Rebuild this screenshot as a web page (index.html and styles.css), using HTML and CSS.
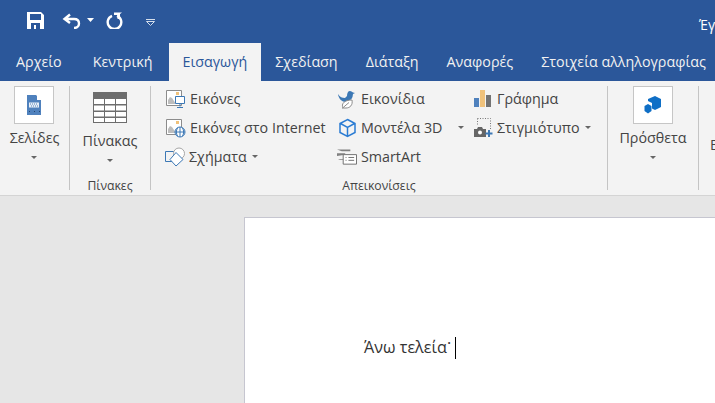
FILE: index.html
```html
<!DOCTYPE html>
<html lang="el">
<head>
<meta charset="utf-8">
<title>Word</title>
<link rel="stylesheet" href="styles.css">
</head>
<body>
<div class="app">
  <header class="titlebar">
    <div class="qat">
      <svg class="qa-save" width="17" height="17" viewBox="0 0 17 17"><path fill="#fff" fill-rule="evenodd" d="M0 0h14l3 3v14H0zM3 2v6h11V2zM4 11v6h3v-4h2v4h4v-6z"/></svg>
      <svg class="qa-undo" width="19" height="16" viewBox="0 0 19 16"><path fill="none" stroke="#fff" stroke-width="2.400" d="M8 1.500 2.500 6 8 10M3 6h9c3.500 0 5 2 5 4.500S15 15 12 15"/></svg>
      <svg class="qa-caret" width="7" height="4" viewBox="0 0 7 4"><path fill="#fff" d="M0 0h7L3.500 4z"/></svg>
      <svg class="qa-redo" width="18" height="17" viewBox="0 0 18 17"><path fill="none" stroke="#fff" stroke-width="2.400" d="M6 3.800a6.800 6.800 0 1 0 5 0"/><path fill="#fff" d="M8 .5h8L14 2v5h-2.500V3H8z"/></svg>
      <svg class="qa-more" width="11" height="7" viewBox="0 0 11 7"><path fill="none" stroke="#d5deeb" d="M1 .5h9M1.500 2.500h8l-4 4z"/></svg>
    </div>
    <div class="doc-title">Έγγραφο1 - Word</div>
  </header>

  <nav class="tabs">
    <span class="tab">Αρχείο</span>
    <span class="tab tab-home">Κεντρική</span>
    <span class="tab tab-active">Εισαγωγή</span>
    <span class="tab">Σχεδίαση</span>
    <span class="tab">Διάταξη</span>
    <span class="tab">Αναφορές</span>
    <span class="tab">Στοιχεία αλληλογραφίας</span>
  </nav>

  <section class="ribbon">
    <div class="group group-pages">
      <div class="big-btn">
        <div class="icon-box">
          <svg width="15" height="20" viewBox="0 0 15 20"><path fill="#4f81bd" d="M0 0h9l5 5v15H0z"/><path fill="#fff" d="M10 0l5 5h-5z"/><path fill="#e8eef6" d="M2 7.500h10v5H2z"/><path fill="#4f81bd" d="M3 8.500h1v1H3zm2 0h1v1H5zm2 0h1v1H7zm2 0h1v1H9zM4 10.500h1v1H4zm2 0h1v1H6zm2 0h1v1H8zm2 0h1v1h-1z"/><path fill="#23456f" d="M2 16h1v1H2zm5 0h1v1H7zm5 0h1v1h-1z"/></svg>
        </div>
        <span class="big-label">Σελίδες</span>
        <span class="caret caret-big"></span>
      </div>
    </div>
    <div class="sep"></div>

    <div class="group group-table">
      <div class="big-btn">
        <svg class="table-icon" width="34" height="31" viewBox="0 0 34 31"><path fill="#6d6d6d" d="M0 0h34v31H0z"/><path fill="#fff" d="M1 7h10v5H1zm11 0h10v5H12zm11 0h10v5H23zM1 13.500h10v5H1zm11 0h10v5H12zm11 0h10v5H23zM1 20h10v4.500H1zm11 0h10v4.500H12zm11 0h10v4.500H23zM1 26h10v4H1zm11 0h10v4H12zm11 0h10v4H23z"/></svg>
        <span class="big-label">Πίνακας</span>
        <span class="caret caret-big"></span>
      </div>
      <div class="group-label">Πίνακες</div>
    </div>
    <div class="sep"></div>

    <div class="group group-illus">
      <div class="columns">
        <div class="col col-a">
          <div class="item">
            <svg width="21" height="20" viewBox="-1 0 21 20"><path fill="#fff" stroke="#8c8c8c" d="M.5 1.500h15v15H.5z"/><path fill="#f0c27b" d="M10 3h3v3h-3z"/><path fill="#bdbdbd" d="M2 15v-4l2-3 2 1 2 3 2 3z"/><path fill="#fff" stroke="#3c78b5" d="M9.500 7.500h9v7h-9z"/><path stroke="#3c78b5" fill="none" d="M14 15v2.500M11 18.500h6"/></svg>
            <span>Εικόνες</span>
          </div>
          <div class="item">
            <svg width="21" height="20" viewBox="-1 0 21 20"><path fill="#fff" stroke="#8c8c8c" d="M.5 1.500h15v15H.5z"/><path fill="#f0c27b" d="M10 3h3v3h-3z"/><path fill="#bdbdbd" d="M2 15v-4l2-3 2 1 2 3 2 3z"/><circle cx="14" cy="14" r="5" fill="#fff" stroke="#3c78b5"/><path stroke="#3c78b5" fill="none" d="M9 14h10M14 9v10M11.500 10c-1.500 2.500-1.500 5.500 0 8M16.500 10c1.500 2.500 1.500 5.500 0 8"/></svg>
            <span>Εικόνες στο Internet</span>
          </div>
          <div class="item">
            <svg width="20" height="20" viewBox="0 0 20 20"><path fill="none" stroke="#3c78b5" d="M.5 4.500h11v10H.5z"/><circle cx="14" cy="6.500" r="5.500" fill="#fff" stroke="#a6a6a6"/><path fill="#fff" stroke="#3c78b5" d="M11 5.500 18 12.500 11 19 5 12.500z"/></svg>
            <span>Σχήματα</span><span class="caret caret-inline"></span>
          </div>
        </div>
        <div class="col col-b">
          <div class="item">
            <svg width="20" height="20" viewBox="0 0 20 20"><path fill="#3c78b5" d="M1 5c2 3 4 4 7 4l2-2c0-3 1-5 3-5 1 0 2 .5 3 1.500l2 .5-2 1-.5 3c-1 3-4 4-7 5-3 0-7-3-7.500-8z"/><path fill="#fff" stroke="#8c8c8c" d="M6 19c-2-4 1-8 9-8 1 5-2 8-6 8z"/><path stroke="#8c8c8c" fill="none" d="M5 19.500l7-6"/></svg>
            <span>Εικονίδια</span>
          </div>
          <div class="item">
            <svg width="20" height="20" viewBox="-1 0 20 20"><path fill="none" stroke="#2b7cd3" stroke-width="1.500" d="M9.500 1.500 17 5.500v9l-7.500 4-7.500-4v-9zM2.500 5.500l7 4 7-4M9.500 9.500v9"/></svg>
            <span>Μοντέλα 3D</span><span class="caret caret-far"></span>
          </div>
          <div class="item">
            <svg width="20" height="18" viewBox="0 0 21 18"><path fill="#808080" d="M0 1h14v2H5zM0 8V5h9l-2 2z"/><path fill="#808080" d="M1 12h6v-1H3z"/><path fill="#fff" stroke="#6d6d6d" d="M6.500 6.500h14v10h-14z"/><path stroke="#6d6d6d" fill="none" d="M9 9.500h1M12 9.500h6M9 12.500h1M12 12.500h6"/></svg>
            <span>SmartArt</span>
          </div>
        </div>
        <div class="col col-c">
          <div class="item">
            <svg width="19" height="18" viewBox="0 0 19 18"><path fill="#4f81bd" d="M0 8h5v9H0z"/><path fill="#f0c27b" d="M6 0h5v17H6z"/><path fill="#737373" d="M12 5h5v12h-5z"/></svg>
            <span>Γράφημα</span>
          </div>
          <div class="item">
            <svg width="19" height="19" viewBox="0 0 19 19"><path fill="none" stroke="#777" stroke-dasharray="1 1.500" d="M3.500 .5h13v11M3.500 .5v7"/><path fill="#666" d="M0 11h3l1-2h4l1 2h3v8H0z"/><circle cx="6" cy="14.500" r="2" fill="#fff"/><path stroke="#3c78b5" stroke-width="2" d="M15 12v7M11.500 15.500h7"/></svg>
            <span>Στιγμιότυπο</span><span class="caret caret-inline"></span>
          </div>
        </div>
      </div>
      <div class="group-label">Απεικονίσεις</div>
    </div>
    <div class="sep"></div>

    <div class="group group-addins">
      <div class="big-btn">
        <div class="icon-box">
          <svg width="18" height="18" viewBox="0 0 18 18"><path fill="#0f6fc6" d="M11 0l6 3v8l-6 3-3-1.500V7L4 5V3z"/><path fill="#0f6fc6" d="M4 8l3.500 2v5L4 17.500.5 15v-5z"/></svg>
        </div>
        <span class="big-label">Πρόσθετα</span>
        <span class="caret caret-big"></span>
      </div>
    </div>
    <div class="sep"></div>
    <div class="group group-rest"><span class="big-label">Βίντεο</span></div>
  </section>

  <main class="canvas">
    <article class="page">
      <p class="doc-line">Άνω τελεία<span class="ano-dot">·</span><span class="cursor"></span></p>
    </article>
  </main>
</div>
</body>
</html>
```
FILE: styles.css
```css
* { box-sizing: border-box; }
html, body { margin: 0; height: 100%; overflow: hidden; }
body { font-family: "Open Sans", "Noto Sans", sans-serif; font-size: 14.300px; color: #444; }
.app { display: flex; flex-direction: column; width: 715px; height: 403px; overflow: hidden; }

.titlebar { flex: none; height: 43px; background: #2b579a; display: flex; color: #fff; }
.qat { flex: none; width: 699px; display: flex; align-items: center; padding: 0 0 3px 27px; }
.qa-undo { margin-left: 18px; margin-top: 1px; }
.qa-caret { margin-left: 6px; }
.qa-redo { margin-left: 12px; }
.qa-more { margin-left: 21px; margin-top: 4px; }
.doc-title { flex: none; white-space: nowrap; line-height: 50px; font-size: 14px; }

.tabs { flex: none; height: 38px; background: #2b579a; display: flex; color: #f1f1f1; white-space: nowrap; padding-left: 2px; }
.tab { padding: 0 14px; line-height: 37px; font-size: 14.300px; }
.tab-home { margin-left: 3px; }
.tab-active { background: #f3f3f3; color: #2b579a; margin-left: 2px; }

.ribbon { flex: none; height: 115px; background: #f3f3f3; border-bottom: 1px solid #d4d4d4; display: flex; padding-top: 5px; }
.sep { flex: none; width: 1px; height: 104px; background: #c4c4c4; }
.group { flex: none; display: flex; flex-direction: column; align-items: center; height: 109px; }
.group-pages { width: 69px; }
.group-table { width: 80px; }
.group-illus { width: 456px; align-items: stretch; }
.group-addins { width: 90px; }
.group-rest { flex: 1; padding: 45px 0 0 11px; align-items: flex-start; white-space: nowrap; }

.big-btn { flex: 1; display: flex; flex-direction: column; align-items: center; }
.icon-box { width: 40px; height: 38px; background: #fff; border: 1px solid #c6c6c6; display: flex; align-items: center; justify-content: center; }
.big-label { font-size: 14.300px; line-height: 18px; margin-top: 5px; color: #444; }
.table-icon { margin-top: 6px; margin-bottom: 4px; }
.caret { width: 0; height: 0; border-style: solid; border-color: #666 transparent transparent; border-width: 3px 3px 0; display: inline-block; flex: none; }
.caret-big { margin-top: 9px; }
.caret-inline { margin-left: 1px; }
.caret-far { margin-left: 12px; }

.group-label { flex: none; height: 16px; line-height: 16px; margin-bottom: 1px; text-align: center; font-size: 12.200px; color: #444; }

.columns { flex: 1; display: flex; }
.col { flex: none; display: flex; flex-direction: column; }
.col-a { width: 172px; margin-left: 14px; }
.col-b { width: 137px; }
.col-c { width: 130px; }
.item { height: 29px; display: flex; align-items: center; gap: 4px; white-space: nowrap; color: #444; margin-top: -2px; margin-bottom: 2px; }
.item svg { flex: none; }

.canvas { flex: 1; background: #e6e6e6; padding: 21px 0 0 244px; min-height: 0; }
.page { width: 471px; height: 200px; background: #fff; border-left: 1px solid #c6c6d0; border-top: 1px solid #c6c6d0; padding: 118px 0 0 119px; }
.doc-line { margin: 0; font-size: 16.200px; color: #333; line-height: 22px; white-space: pre; }
.ano-dot { vertical-align: 4px; line-height: 0; }
.cursor { display: inline-block; width: 1px; height: 22px; background: #000; margin-left: 4px; vertical-align: -6px; }
```
